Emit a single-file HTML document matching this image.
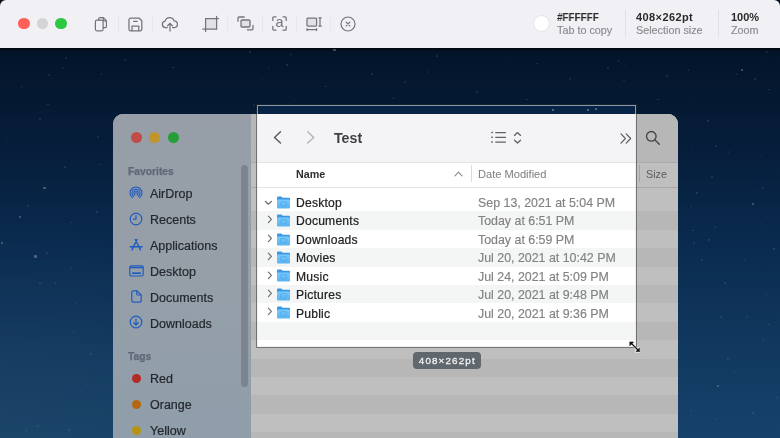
<!DOCTYPE html>
<html>
<head>
<meta charset="utf-8">
<title>Screenshot</title>
<style>
html,body{margin:0;padding:0;}
body{width:780px;height:438px;overflow:hidden;background:#060d18;font-family:"Liberation Sans",sans-serif;position:relative;}
.abs{position:absolute;}
.it,.row{-webkit-text-stroke:0.22px currentColor;}
.date,.t2{-webkit-text-stroke:0.15px currentColor;}
.t1,.t2,.it,.hd,.row,.date,#lab,.abs,.gt{will-change:transform;}
#bar{position:absolute;left:0;top:0;width:780px;height:48px;background:#f1f1f5;border-radius:6px 6px 0 0;z-index:20;}
#bar .dot{position:absolute;top:18px;width:11.300px;height:11.300px;margin-left:0px;border-radius:50%;}
#bar .sep{position:absolute;top:17px;width:1px;height:14px;background:#e5e5ea;}
#bar svg{position:absolute;overflow:visible;}
#bar .t1{position:absolute;top:11px;font-size:11px;font-weight:bold;color:#2a2a2c;white-space:nowrap;line-height:12px;}
#bar .t2{position:absolute;top:24px;font-size:10.8px;color:#8a8a8e;white-space:nowrap;line-height:12px;}
#screen{position:absolute;left:0;top:48px;width:780px;height:390px;overflow:hidden;background:#04244f;}
#wall{position:absolute;left:0;top:0;width:780px;height:390px;
 background:
 linear-gradient(180deg,rgba(0,0,0,0.75) 0px,rgba(0,0,0,0.25) 2px,rgba(0,0,0,0) 5px),
 radial-gradient(ellipse 300px 220px at 0% 100%, rgba(60,100,140,0.28), rgba(60,100,140,0) 100%),
 linear-gradient(180deg,#051b38 0%,#08284f 26%,#0e3a6a 51%,#174c80 77%,#1e598e 100%);}
.star{position:absolute;border-radius:50%;background:#c4d4ea;}
#win{position:absolute;left:113px;top:66px;width:565px;height:340px;border-radius:10px 10px 0 0;overflow:hidden;background:#fff;}
#side{position:absolute;left:0;top:0;width:138px;height:340px;background:linear-gradient(180deg,#cad3e0 0%,#c8d4e1 45%,#bfd3e4 100%);}
#side .tl{position:absolute;top:18px;width:11px;height:11px;border-radius:50%;}
#side .hd{position:absolute;left:14.600px;font-size:10.300px;font-weight:bold;color:#7f8b9e;-webkit-text-stroke:0.25px #7f8b9e;line-height:12px;}
#side .it{position:absolute;left:36.800px;font-size:12.5px;color:#30353d;line-height:14px;white-space:nowrap;}
#side svg{position:absolute;overflow:visible;}
#side .tag{position:absolute;left:19px;width:9px;height:9px;border-radius:50%;}
#thumb{position:absolute;left:128px;top:51px;width:7px;height:222px;border-radius:4px;background:#a5b0bf;}
#main{position:absolute;left:138px;top:0;width:427px;height:340px;background:#fff;}
#ftb{position:absolute;left:0;top:0;width:427px;height:48px;background:#f4f4f6;border-bottom:1px solid #e4e4e6;}
#main svg{position:absolute;overflow:visible;}
.stripe{position:absolute;left:0;width:427px;height:18.4px;background:#f4f5f5;}
.row{position:absolute;left:44.600px;font-size:12.100px;letter-spacing:0.22px;color:#222224;line-height:14px;white-space:nowrap;}
.date{position:absolute;left:227px;font-size:12.400px;color:#828282;line-height:14px;white-space:nowrap;}
#sel{position:absolute;left:257px;top:57px;width:377px;height:240px;border:1px solid rgba(225,230,238,0.6);box-shadow:0 0 0 2000px rgba(0,0,0,0.25), 0 0 0 1px rgba(60,60,60,0.5);z-index:5;}
#lab{position:absolute;left:413px;top:304px;width:67.5px;height:17.3px;border-radius:4px;background:#60676d;color:#f2f2f2;font-size:9.8px;-webkit-text-stroke:0.3px #f2f2f2;line-height:18.5px;text-align:center;z-index:6;letter-spacing:1.15px;text-indent:1.1px;}
</style>
</head>
<body>
<svg width="0" height="0" style="position:absolute"><defs><linearGradient id="fg" x1="0" y1="0" x2="0" y2="1"><stop offset="0" stop-color="#78cbfb"/><stop offset="1" stop-color="#58b3ef"/></linearGradient></defs></svg>
<div id="screen">
  <div id="wall"></div>
  <div id="stars"><i class="star" style="left:64.9px;top:8.8px;width:2.0px;height:2.0px;opacity:0.16"></i><i class="star" style="left:61.5px;top:19.2px;width:1.6px;height:1.6px;opacity:0.22"></i><i class="star" style="left:100.7px;top:25.0px;width:1.6px;height:1.6px;opacity:0.20"></i><i class="star" style="left:48.0px;top:25.7px;width:2.0px;height:2.0px;opacity:0.18"></i><i class="star" style="left:20.6px;top:38.4px;width:1.6px;height:1.6px;opacity:0.16"></i><i class="star" style="left:47.2px;top:55.7px;width:1.6px;height:1.6px;opacity:0.22"></i><i class="star" style="left:39.0px;top:70.0px;width:2.0px;height:2.0px;opacity:0.20"></i><i class="star" style="left:5.9px;top:89.6px;width:1.6px;height:1.6px;opacity:0.18"></i><i class="star" style="left:97.2px;top:88.2px;width:1.6px;height:1.6px;opacity:0.16"></i><i class="star" style="left:63.5px;top:117.9px;width:2.0px;height:2.0px;opacity:0.22"></i><i class="star" style="left:99.2px;top:115.8px;width:1.6px;height:1.6px;opacity:0.20"></i><i class="star" style="left:51.7px;top:150.6px;width:1.6px;height:1.6px;opacity:0.18"></i><i class="star" style="left:26.6px;top:157.0px;width:2.0px;height:2.0px;opacity:0.16"></i><i class="star" style="left:96.2px;top:163.0px;width:1.6px;height:1.6px;opacity:0.22"></i><i class="star" style="left:70.2px;top:173.7px;width:1.6px;height:1.6px;opacity:0.20"></i><i class="star" style="left:45.7px;top:203.8px;width:2.0px;height:2.0px;opacity:0.18"></i><i class="star" style="left:70.4px;top:219.6px;width:1.6px;height:1.6px;opacity:0.16"></i><i class="star" style="left:54.9px;top:234.2px;width:1.6px;height:1.6px;opacity:0.22"></i><i class="star" style="left:39.0px;top:234.0px;width:2.0px;height:2.0px;opacity:0.20"></i><i class="star" style="left:74.9px;top:254.2px;width:1.6px;height:1.6px;opacity:0.18"></i><i class="star" style="left:72.7px;top:283.2px;width:1.6px;height:1.6px;opacity:0.16"></i><i class="star" style="left:90.3px;top:305.3px;width:2.0px;height:2.0px;opacity:0.22"></i><i class="star" style="left:2.7px;top:313.5px;width:1.6px;height:1.6px;opacity:0.20"></i><i class="star" style="left:87.2px;top:335.8px;width:1.6px;height:1.6px;opacity:0.18"></i><i class="star" style="left:36.8px;top:376.5px;width:2.0px;height:2.0px;opacity:0.16"></i><i class="star" style="left:25.9px;top:381.2px;width:1.6px;height:1.6px;opacity:0.22"></i><i class="star" style="left:68.2px;top:381.2px;width:1.6px;height:1.6px;opacity:0.20"></i><i class="star" style="left:124.3px;top:11.2px;width:2.0px;height:2.0px;opacity:0.18"></i><i class="star" style="left:160.6px;top:24.5px;width:1.6px;height:1.6px;opacity:0.16"></i><i class="star" style="left:172.4px;top:18.8px;width:1.6px;height:1.6px;opacity:0.22"></i><i class="star" style="left:248.5px;top:2.5px;width:2.0px;height:2.0px;opacity:0.20"></i><i class="star" style="left:261.8px;top:30.6px;width:1.6px;height:1.6px;opacity:0.18"></i><i class="star" style="left:268.3px;top:18.8px;width:1.6px;height:1.6px;opacity:0.16"></i><i class="star" style="left:285.5px;top:15.6px;width:2.0px;height:2.0px;opacity:0.22"></i><i class="star" style="left:290.1px;top:5.7px;width:1.6px;height:1.6px;opacity:0.20"></i><i class="star" style="left:294.5px;top:51.5px;width:1.6px;height:1.6px;opacity:0.18"></i><i class="star" style="left:252.8px;top:55.7px;width:2.0px;height:2.0px;opacity:0.16"></i><i class="star" style="left:325.0px;top:37.6px;width:1.6px;height:1.6px;opacity:0.22"></i><i class="star" style="left:369.9px;top:15.8px;width:1.6px;height:1.6px;opacity:0.20"></i><i class="star" style="left:370.5px;top:25.2px;width:2.0px;height:2.0px;opacity:0.18"></i><i class="star" style="left:404.3px;top:33.2px;width:1.6px;height:1.6px;opacity:0.16"></i><i class="star" style="left:392.5px;top:49.3px;width:1.6px;height:1.6px;opacity:0.22"></i><i class="star" style="left:436.0px;top:6.8px;width:2.0px;height:2.0px;opacity:0.20"></i><i class="star" style="left:426.5px;top:23.2px;width:1.6px;height:1.6px;opacity:0.18"></i><i class="star" style="left:480.6px;top:24.5px;width:1.6px;height:1.6px;opacity:0.16"></i><i class="star" style="left:476.0px;top:42.6px;width:2.0px;height:2.0px;opacity:0.22"></i><i class="star" style="left:526.4px;top:50.6px;width:1.6px;height:1.6px;opacity:0.20"></i><i class="star" style="left:536.0px;top:14.5px;width:1.6px;height:1.6px;opacity:0.18"></i><i class="star" style="left:568.9px;top:30.4px;width:2.0px;height:2.0px;opacity:0.16"></i><i class="star" style="left:617.9px;top:12.2px;width:1.6px;height:1.6px;opacity:0.22"></i><i class="star" style="left:624.5px;top:15.8px;width:1.6px;height:1.6px;opacity:0.20"></i><i class="star" style="left:606.8px;top:18.6px;width:2.0px;height:2.0px;opacity:0.18"></i><i class="star" style="left:623.2px;top:31.9px;width:1.6px;height:1.6px;opacity:0.16"></i><i class="star" style="left:657.2px;top:50.6px;width:1.6px;height:1.6px;opacity:0.22"></i><i class="star" style="left:665.7px;top:27.3px;width:2.0px;height:2.0px;opacity:0.20"></i><i class="star" style="left:689.9px;top:51.5px;width:1.6px;height:1.6px;opacity:0.18"></i><i class="star" style="left:735.6px;top:25.4px;width:1.6px;height:1.6px;opacity:0.16"></i><i class="star" style="left:753.7px;top:29.5px;width:2.0px;height:2.0px;opacity:0.22"></i><i class="star" style="left:768.3px;top:40.6px;width:1.6px;height:1.6px;opacity:0.20"></i><i class="star" style="left:687.7px;top:21.0px;width:1.6px;height:1.6px;opacity:0.18"></i><i class="star" style="left:766.0px;top:2.5px;width:2.0px;height:2.0px;opacity:0.16"></i><i class="star" style="left:707.0px;top:72.4px;width:1.6px;height:1.6px;opacity:0.22"></i><i class="star" style="left:690.9px;top:96.7px;width:1.6px;height:1.6px;opacity:0.20"></i><i class="star" style="left:715.0px;top:97.3px;width:2.0px;height:2.0px;opacity:0.18"></i><i class="star" style="left:727.6px;top:103.1px;width:1.6px;height:1.6px;opacity:0.16"></i><i class="star" style="left:760.5px;top:106.8px;width:1.6px;height:1.6px;opacity:0.22"></i><i class="star" style="left:710.5px;top:128.3px;width:2.0px;height:2.0px;opacity:0.20"></i><i class="star" style="left:755.6px;top:140.5px;width:1.6px;height:1.6px;opacity:0.18"></i><i class="star" style="left:762.0px;top:139.0px;width:1.6px;height:1.6px;opacity:0.16"></i><i class="star" style="left:695.6px;top:144.0px;width:2.0px;height:2.0px;opacity:0.22"></i><i class="star" style="left:690.2px;top:157.7px;width:1.6px;height:1.6px;opacity:0.20"></i><i class="star" style="left:766.9px;top:167.8px;width:1.6px;height:1.6px;opacity:0.18"></i><i class="star" style="left:714.3px;top:177.7px;width:2.0px;height:2.0px;opacity:0.16"></i><i class="star" style="left:692.0px;top:181.7px;width:1.6px;height:1.6px;opacity:0.22"></i><i class="star" style="left:708.1px;top:191.0px;width:1.6px;height:1.6px;opacity:0.20"></i><i class="star" style="left:693.0px;top:193.8px;width:2.0px;height:2.0px;opacity:0.18"></i><i class="star" style="left:763.9px;top:181.7px;width:1.6px;height:1.6px;opacity:0.16"></i><i class="star" style="left:773.2px;top:200.4px;width:1.6px;height:1.6px;opacity:0.22"></i><i class="star" style="left:701.2px;top:210.6px;width:2.0px;height:2.0px;opacity:0.20"></i><i class="star" style="left:744.4px;top:210.8px;width:1.6px;height:1.6px;opacity:0.18"></i><i class="star" style="left:678.9px;top:167.8px;width:1.6px;height:1.6px;opacity:0.16"></i><i class="star" style="left:723.6px;top:234.4px;width:2.0px;height:2.0px;opacity:0.22"></i><i class="star" style="left:765.0px;top:245.8px;width:1.6px;height:1.6px;opacity:0.20"></i><i class="star" style="left:720.1px;top:268.2px;width:1.6px;height:1.6px;opacity:0.18"></i><i class="star" style="left:746.0px;top:268.0px;width:2.0px;height:2.0px;opacity:0.16"></i><i class="star" style="left:768.0px;top:275.7px;width:1.6px;height:1.6px;opacity:0.22"></i><i class="star" style="left:762.0px;top:290.7px;width:1.6px;height:1.6px;opacity:0.20"></i><i class="star" style="left:727.4px;top:310.3px;width:2.0px;height:2.0px;opacity:0.18"></i><i class="star" style="left:733.9px;top:323.2px;width:1.6px;height:1.6px;opacity:0.16"></i><i class="star" style="left:690.2px;top:361.7px;width:1.6px;height:1.6px;opacity:0.22"></i><i class="star" style="left:752.4px;top:364.2px;width:2.0px;height:2.0px;opacity:0.20"></i><i class="star" style="left:714.5px;top:370.4px;width:1.6px;height:1.6px;opacity:0.18"></i><i class="star" style="left:776.2px;top:348.7px;width:1.6px;height:1.6px;opacity:0.16"></i><i class="star" style="left:43.3px;top:139.0px;width:2.4px;height:2.4px;opacity:0.50"></i><i class="star" style="left:18.8px;top:168.0px;width:2.4px;height:2.4px;opacity:0.50"></i><i class="star" style="left:34.4px;top:207.2px;width:2.4px;height:2.4px;opacity:0.50"></i><i class="star" style="left:0.8px;top:193.8px;width:2.4px;height:2.4px;opacity:0.50"></i><i class="star" style="left:333.3px;top:0.6px;width:2.4px;height:2.4px;opacity:0.50"></i><i class="star" style="left:740.9px;top:20.6px;width:2.4px;height:2.4px;opacity:0.50"></i><i class="star" style="left:751.5px;top:155.1px;width:2.4px;height:2.4px;opacity:0.50"></i><i class="star" style="left:716.7px;top:337.0px;width:2.4px;height:2.4px;opacity:0.50"></i><i class="star" style="left:587.0px;top:61.1px;width:2.4px;height:2.4px;opacity:0.50"></i><i class="star" style="left:594.8px;top:59.8px;width:2.4px;height:2.4px;opacity:0.50"></i><i class="star" style="left:552.1px;top:61.1px;width:2.4px;height:2.4px;opacity:0.50"></i></div>
  <div id="win">
    <div id="side">
      <div class="tl" style="left:18px;background:#ff665e;"></div>
      <div class="tl" style="left:36.300px;background:#ffc83c;"></div>
      <div class="tl" style="left:55px;background:#30d34c;"></div>
      <div class="hd" style="top:52px;">Favorites</div>
      <!-- airdrop -->
      <svg style="left:16.200px;top:72px" width="14" height="14" viewBox="0 0 14 14" fill="none" stroke="#2a7bff" stroke-width="1.150" stroke-linecap="round">
        <path d="M3.560 11.900A6 6 0 1 1 10.440 11.900"/>
        <path d="M4.710 10.380A4 4 0 1 1 9.290 10.380"/>
        <path d="M5.800 8.820A2.100 2.100 0 1 1 8.200 8.820"/>
        <circle cx="7" cy="7.100" r=".9" fill="#2a7bff" stroke="none"/>
      </svg>
      <div class="it" style="top:72.5px;">AirDrop</div>
      <!-- recents -->
      <svg style="left:16px;top:98px" width="14" height="14" viewBox="0 0 14 14" fill="none" stroke="#2a7bff" stroke-width="1.200" stroke-linecap="round" stroke-linejoin="round">
        <circle cx="7" cy="7" r="5.800"/>
        <path d="M7 3.600V7.200H4.400"/>
      </svg>
      <div class="it" style="top:98.5px;">Recents</div>
      <!-- applications -->
      <svg style="left:16px;top:124px" width="14" height="14" viewBox="0 0 14 14" fill="none" stroke="#2a7bff" stroke-width="1.400" stroke-linecap="round" stroke-linejoin="round">
        <path d="M8 1.500L3 11.900M6.300 1.500L11.500 11.900M1.200 8.700H13.200"/>
      </svg>
      <div class="it" style="top:124.5px;">Applications</div>
      <!-- desktop -->
      <svg style="left:16px;top:151px" width="15" height="12" viewBox="0 0 15 12" fill="none" stroke="#2a7bff" stroke-width="1.200" stroke-linejoin="round">
        <rect x=".8" y=".8" width="13.400" height="10.200" rx="1.500"/>
        <path d="M1 2.600h13" stroke-width="1.400"/>
        <path d="M3 8.200h9" stroke-width="1.700"/>
      </svg>
      <div class="it" style="top:150.5px;">Desktop</div>
      <!-- documents -->
      <svg style="left:18px;top:176px" width="11" height="13" viewBox="0 0 11 13" fill="none" stroke="#2a7bff" stroke-width="1.200" stroke-linejoin="round" stroke-linecap="round">
        <path d="M2.200 .8h3.800l4.200 4.200v5.800a1.400 1.400 0 0 1-1.400 1.400H2.200A1.400 1.400 0 0 1 .8 10.800V2.200A1.400 1.400 0 0 1 2.200 .8z"/>
        <path d="M5.800 1v3a1 1 0 0 0 1 1h3"/>
      </svg>
      <div class="it" style="top:176.5px;">Documents</div>
      <!-- downloads -->
      <svg style="left:16px;top:201px" width="14" height="14" viewBox="0 0 14 14" fill="none" stroke="#2a7bff" stroke-width="1.200" stroke-linecap="round" stroke-linejoin="round">
        <circle cx="7" cy="7" r="5.800"/>
        <path d="M7 3.800v6M4.600 7.600L7 10l2.400-2.400"/>
      </svg>
      <div class="it" style="top:202.5px;">Downloads</div>
      <div class="hd" style="top:237px;">Tags</div>
      <div class="tag" style="top:259.500px;background:#f03a32;"></div>
      <div class="it" style="top:257.5px;">Red</div>
      <div class="tag" style="top:285.500px;background:#f08a18;"></div>
      <div class="it" style="top:283.5px;">Orange</div>
      <div class="tag" style="top:311.500px;background:#f0c41c;"></div>
      <div class="it" style="top:309.5px;">Yellow</div>
      <div id="thumb"></div>
    </div>
    <div id="main">
      <div id="ftb"></div>
      <!-- back / fwd -->
      <svg style="left:21px;top:16px" width="11" height="15" viewBox="0 0 11 15" fill="none" stroke="#58585c" stroke-width="1.400" stroke-linecap="round" stroke-linejoin="round"><path d="M8.500 1.700L2.500 7.400 8.500 13.100"/></svg>
      <svg style="left:54px;top:16px" width="11" height="15" viewBox="0 0 11 15" fill="none" stroke="#b4b4b8" stroke-width="1.400" stroke-linecap="round" stroke-linejoin="round"><path d="M2.700 1.700L8.700 7.400 2.700 13.100"/></svg>
      <div class="abs" style="left:83.300px;top:14.600px;font-size:14.200px;font-weight:bold;color:#404044;line-height:18px;">Test</div>
      <!-- list icon -->
      <svg style="left:240px;top:17px" width="16" height="13" viewBox="0 0 16 13" fill="none" stroke="#626266" stroke-width="1.250" stroke-linecap="round">
        <path d="M4.700 1.600h9.800M4.700 6.300h9.800M4.700 11h9.800"/>
        <path d="M.8 1.600h.5M.8 6.300h.5M.8 11h.5" stroke-width="1.500"/>
      </svg>
      <svg style="left:262px;top:17px" width="9" height="14" viewBox="0 0 9 14" fill="none" stroke="#626266" stroke-width="1.300" stroke-linecap="round" stroke-linejoin="round">
        <path d="M1.500 4.400L4.500 1.600l3 2.800M1.500 9.200l3 2.800 3-2.800"/>
      </svg>
      <svg style="left:369px;top:19px" width="12" height="11" viewBox="0 0 12 11" fill="none" stroke="#5c5c60" stroke-width="1.200" stroke-linecap="round" stroke-linejoin="round">
        <path d="M1 .8L5.400 5.500 1 10.200M6.200 .8l4.400 4.700-4.400 4.700"/>
      </svg>
      <svg style="left:394.400px;top:15.600px" width="16" height="16" viewBox="0 0 16 16" fill="none" stroke="#5a5a5e" stroke-width="1.350" stroke-linecap="round">
        <circle cx="6.300" cy="6.300" r="4.800"/><path d="M9.800 9.800l4.500 4.500"/>
      </svg>
      <!-- header -->
      <div class="abs" style="left:44.700px;top:54px;font-size:10.700px;font-weight:bold;color:#2e2e30;line-height:12px;">Name</div>
      <svg style="left:203px;top:57px" width="9" height="6" viewBox="0 0 9 6" fill="none" stroke="#8a8a8e" stroke-width="1.100" stroke-linecap="round" stroke-linejoin="round"><path d="M1 4.800L4.500 1.200 8 4.800"/></svg>
      <div class="abs" style="left:219.500px;top:51px;width:1px;height:17px;background:#dcdcde;"></div>
      <div class="abs" style="left:227px;top:54px;font-size:11.100px;color:#7c7c80;line-height:12px;white-space:nowrap;">Date Modified</div>
      <div class="abs" style="left:388px;top:51px;width:1px;height:17px;background:#dcdcde;"></div>
      <div class="abs" style="left:395px;top:54px;font-size:10.800px;color:#7c7c80;line-height:12px;">Size</div>
      <div class="abs" style="left:0;top:73px;width:427px;height:1px;background:#e2e2e4;"></div>
      <div class="stripe" style="top:97.4px;"></div>
      <div class="stripe" style="top:134.2px;"></div>
      <div class="stripe" style="top:171.0px;"></div>
      <div class="stripe" style="top:207.8px;"></div>
      <div class="stripe" style="top:244.6px;"></div>
      <div class="stripe" style="top:281.4px;"></div>
      <div class="stripe" style="top:318.2px;"></div>
      <div class="stripe" style="top:355.0px;"></div>
      <svg style="left:13px;top:85.5px" width="9" height="6" viewBox="0 0 9 6" fill="none" stroke="#6e6e72" stroke-width="1.200" stroke-linecap="round" stroke-linejoin="round"><path d="M1.300 1.300L4.400 4.200 7.500 1.300"/></svg>
      <svg style="left:25px;top:81.7px" width="15" height="13" viewBox="0 0 15 13"><path d="M1 1.600A1 1 0 0 1 2 .6h3.200a1 1 0 0 1 .7.300l.8.800h6.300a1 1 0 0 1 1 1V5H1z" fill="#3b98e4"/><rect x="1" y="3.400" width="13" height="9.100" rx="1.100" fill="url(#fg)"/><rect x="4.700" y="5.700" width="5.600" height="4.200" rx=".6" fill="none" stroke="#4ea8ea" stroke-width=".8"/></svg>
      <div class="row" style="top:81.7px;">Desktop</div>
      <div class="date" style="top:81.7px;">Sep 13, 2021 at 5:04 PM</div>
      <svg style="left:15.700px;top:101.3px" width="6" height="9" viewBox="0 0 6 9" fill="none" stroke="#6e6e72" stroke-width="1.200" stroke-linecap="round" stroke-linejoin="round"><path d="M1.400 1.200L4.400 4.400 1.400 7.600"/></svg>
      <svg style="left:25px;top:100.1px" width="15" height="13" viewBox="0 0 15 13"><path d="M1 1.600A1 1 0 0 1 2 .6h3.200a1 1 0 0 1 .7.300l.8.800h6.300a1 1 0 0 1 1 1V5H1z" fill="#3b98e4"/><rect x="1" y="3.400" width="13" height="9.100" rx="1.100" fill="url(#fg)"/><rect x="4.700" y="5.700" width="5.600" height="4.200" rx=".6" fill="none" stroke="#4ea8ea" stroke-width=".8"/></svg>
      <div class="row" style="top:100.2px;">Documents</div>
      <div class="date" style="top:100.2px;">Today at 6:51 PM</div>
      <svg style="left:15.700px;top:119.7px" width="6" height="9" viewBox="0 0 6 9" fill="none" stroke="#6e6e72" stroke-width="1.200" stroke-linecap="round" stroke-linejoin="round"><path d="M1.400 1.200L4.400 4.400 1.400 7.600"/></svg>
      <svg style="left:25px;top:118.5px" width="15" height="13" viewBox="0 0 15 13"><path d="M1 1.600A1 1 0 0 1 2 .6h3.200a1 1 0 0 1 .7.300l.8.800h6.300a1 1 0 0 1 1 1V5H1z" fill="#3b98e4"/><rect x="1" y="3.400" width="13" height="9.100" rx="1.100" fill="url(#fg)"/><rect x="4.700" y="5.700" width="5.600" height="4.200" rx=".6" fill="none" stroke="#4ea8ea" stroke-width=".8"/></svg>
      <div class="row" style="top:118.7px;">Downloads</div>
      <div class="date" style="top:118.7px;">Today at 6:59 PM</div>
      <svg style="left:15.700px;top:138.1px" width="6" height="9" viewBox="0 0 6 9" fill="none" stroke="#6e6e72" stroke-width="1.200" stroke-linecap="round" stroke-linejoin="round"><path d="M1.400 1.200L4.400 4.400 1.400 7.600"/></svg>
      <svg style="left:25px;top:136.9px" width="15" height="13" viewBox="0 0 15 13"><path d="M1 1.600A1 1 0 0 1 2 .6h3.200a1 1 0 0 1 .7.300l.8.800h6.300a1 1 0 0 1 1 1V5H1z" fill="#3b98e4"/><rect x="1" y="3.400" width="13" height="9.100" rx="1.100" fill="url(#fg)"/><rect x="4.700" y="5.700" width="5.600" height="4.200" rx=".6" fill="none" stroke="#4ea8ea" stroke-width=".8"/></svg>
      <div class="row" style="top:137.2px;">Movies</div>
      <div class="date" style="top:137.2px;">Jul 20, 2021 at 10:42 PM</div>
      <svg style="left:15.700px;top:156.5px" width="6" height="9" viewBox="0 0 6 9" fill="none" stroke="#6e6e72" stroke-width="1.200" stroke-linecap="round" stroke-linejoin="round"><path d="M1.400 1.200L4.400 4.400 1.400 7.600"/></svg>
      <svg style="left:25px;top:155.3px" width="15" height="13" viewBox="0 0 15 13"><path d="M1 1.600A1 1 0 0 1 2 .6h3.200a1 1 0 0 1 .7.300l.8.800h6.300a1 1 0 0 1 1 1V5H1z" fill="#3b98e4"/><rect x="1" y="3.400" width="13" height="9.100" rx="1.100" fill="url(#fg)"/><rect x="4.700" y="5.700" width="5.600" height="4.200" rx=".6" fill="none" stroke="#4ea8ea" stroke-width=".8"/></svg>
      <div class="row" style="top:155.7px;">Music</div>
      <div class="date" style="top:155.7px;">Jul 24, 2021 at 5:09 PM</div>
      <svg style="left:15.700px;top:174.9px" width="6" height="9" viewBox="0 0 6 9" fill="none" stroke="#6e6e72" stroke-width="1.200" stroke-linecap="round" stroke-linejoin="round"><path d="M1.400 1.200L4.400 4.400 1.400 7.600"/></svg>
      <svg style="left:25px;top:173.7px" width="15" height="13" viewBox="0 0 15 13"><path d="M1 1.600A1 1 0 0 1 2 .6h3.200a1 1 0 0 1 .7.300l.8.800h6.300a1 1 0 0 1 1 1V5H1z" fill="#3b98e4"/><rect x="1" y="3.400" width="13" height="9.100" rx="1.100" fill="url(#fg)"/><rect x="4.700" y="5.700" width="5.600" height="4.200" rx=".6" fill="none" stroke="#4ea8ea" stroke-width=".8"/></svg>
      <div class="row" style="top:174.2px;">Pictures</div>
      <div class="date" style="top:174.2px;">Jul 20, 2021 at 9:48 PM</div>
      <svg style="left:15.700px;top:193.3px" width="6" height="9" viewBox="0 0 6 9" fill="none" stroke="#6e6e72" stroke-width="1.200" stroke-linecap="round" stroke-linejoin="round"><path d="M1.400 1.200L4.400 4.400 1.400 7.600"/></svg>
      <svg style="left:25px;top:192.1px" width="15" height="13" viewBox="0 0 15 13"><path d="M1 1.600A1 1 0 0 1 2 .6h3.200a1 1 0 0 1 .7.300l.8.800h6.300a1 1 0 0 1 1 1V5H1z" fill="#3b98e4"/><rect x="1" y="3.400" width="13" height="9.100" rx="1.100" fill="url(#fg)"/><rect x="4.700" y="5.700" width="5.600" height="4.200" rx=".6" fill="none" stroke="#4ea8ea" stroke-width=".8"/></svg>
      <div class="row" style="top:192.7px;">Public</div>
      <div class="date" style="top:192.7px;">Jul 20, 2021 at 9:36 PM</div>
    </div>
  </div>
  <div id="sel"></div>
  <div id="lab">408×262pt</div>
  <svg style="position:absolute;left:629px;top:293px;z-index:7;overflow:visible" width="12" height="12" viewBox="0 0 12 12">
    <g fill="#fff" stroke="#fff" stroke-width="2.200" stroke-linejoin="round" stroke-linecap="round"><path d="M1 1h3.600L1 4.600z"/><path d="M10.500 10.500H6.900l3.600-3.600z"/><path d="M2.500 2.500L9 9"/></g>
    <g fill="#111" stroke="#111" stroke-width=".6" stroke-linejoin="round" stroke-linecap="round"><path d="M1 1h3.600L1 4.600z"/><path d="M10.500 10.500H6.900l3.600-3.600z"/><path d="M2.500 2.500L9 9" stroke-width="1.300"/></g>
  </svg>

</div>
<div id="bar">
  <div class="dot" style="left:18.3px;background:#fe5f57;"></div>
  <div class="dot" style="left:36.8px;background:#d4d4d6;"></div>
  <div class="dot" style="left:55.3px;background:#2bc840;"></div>
  <div class="sep" style="left:118px"></div>
  <div class="sep" style="left:152px"></div>
  <div class="sep" style="left:227px"></div>
  <div class="sep" style="left:262px"></div>
  <div class="sep" style="left:296px"></div>
  <div class="sep" style="left:330px"></div>
  <!-- copy -->
  <svg style="left:94px;top:16px" width="14" height="16" viewBox="0 0 14 16" fill="none" stroke="#737378" stroke-width="1.200" stroke-linejoin="round" stroke-linecap="round">
    <path d="M4.700 4V2.900a1.300 1.300 0 0 1 1.300-1.300h3.400l3 3v5.800a1.300 1.300 0 0 1-1.300 1.300H9.300"/>
    <path d="M9.300 1.800v2.100a.9.900 0 0 0 .9.900h2.100"/>
    <rect x="1.400" y="4.200" width="7.700" height="10.600" rx="1.500"/>
  </svg>
  <!-- save -->
  <svg style="left:128px;top:17px" width="15" height="15" viewBox="0 0 15 15" fill="none" stroke="#737378" stroke-width="1.25" stroke-linejoin="round" stroke-linecap="round">
    <path d="M2.6 1.2h8.6l2.6 2.6v8.4a1.6 1.6 0 0 1-1.6 1.6H2.6A1.6 1.6 0 0 1 1 12.200V2.800A1.6 1.6 0 0 1 2.600 1.200z"/>
    <path d="M4 13.600V9.000h6.800v4.600"/>
    <path d="M5.600 4.400h3.600"/>
  </svg>
  <!-- cloud -->
  <svg style="left:161px;top:16px" width="18" height="16" viewBox="0 0 18 16" fill="none" stroke="#737378" stroke-width="1.25" stroke-linejoin="round" stroke-linecap="round">
    <path d="M6.200 11.600H4.600a3.200 3.200 0 0 1-.5-6.360A4.600 4.600 0 0 1 13 4.800a3.400 3.400 0 0 1 .4 6.780h-1.800"/>
    <path d="M9 15V7.600"/>
    <path d="M6.600 9.800L9 7.400l2.400 2.400"/>
  </svg>
  <!-- crop -->
  <svg style="left:202px;top:16px" width="18" height="17" viewBox="0 0 18 17" fill="none" stroke="#737378" stroke-width="1.250" stroke-linecap="round">
    <rect x="3.600" y="2.600" width="11" height="10.400" fill="#e2e2e6" stroke="none"/>
    <path d="M3.600 2.600v13M.8 13h13.800"/>
    <path d="M14.600 .4v12.600M3.600 2.600h13"/>
  </svg>
  <!-- windows -->
  <svg style="left:237px;top:16px" width="17" height="15" viewBox="0 0 17 15" fill="none" stroke="#737378" stroke-width="1.300" stroke-linecap="round" stroke-linejoin="round">
    <rect x="4" y="4" width="9" height="7" rx="1" fill="#e2e2e6"/>
    <path d="M1 5.200V2.200a1.200 1.200 0 0 1 1.200-1.200h5"/>
    <path d="M16 9.400v3.200a1.200 1.200 0 0 1-1.200 1.200H10.400"/>
  </svg>
  <!-- [a] -->
  <svg class="gt" style="left:272px;top:16px" width="15" height="15" viewBox="0 0 15 15" fill="none" stroke="#737378" stroke-width="1.250" stroke-linecap="round" stroke-linejoin="round">
    <path d="M.8 4.400V1.800a1 1 0 0 1 1-1h2.200"/>
    <path d="M14.200 4.400V1.800a1 1 0 0 0-1-1h-2.200"/>
    <path d="M.8 10.400v2.800a1 1 0 0 0 1 1h2.200"/>
    <path d="M14.200 10.400v2.800a1 1 0 0 1-1 1h-2.200"/>
    <text x="7.600" y="11.100" font-size="14.500" font-family="Liberation Sans, sans-serif" fill="#737378" stroke="none" text-anchor="middle">a</text>
  </svg>
  <!-- monitor text -->
  <svg style="left:306px;top:17px" width="16" height="14" viewBox="0 0 16 14" fill="none" stroke="#737378" stroke-width="1.250" stroke-linecap="round" stroke-linejoin="round">
    <rect x="1" y="1" width="9.600" height="8" rx=".8" fill="#e2e2e6"/>
    <path d="M1 12.600h9.600M1 11.600v2M10.600 11.600v2" stroke-width="1.200"/>
    <path d="M14 1v8M12.800 .8h2.400M12.800 9.200h2.400" stroke-width="1.200"/>
  </svg>
  <!-- close -->
  <svg style="left:340px;top:16px" width="16" height="16" viewBox="0 0 16 16" fill="none" stroke="#737378" stroke-width="1.200" stroke-linecap="round">
    <circle cx="8" cy="8" r="7"/>
    <path d="M6.150 6.150l3.700 3.700M9.850 6.150l-3.700 3.700"/>
  </svg>
  <div class="abs" style="left:533px;top:15px;width:15px;height:15px;border-radius:50%;background:#fff;border:1px solid #e2e2e4;"></div>
  <div class="t1" style="left:557px;transform:scaleX(0.9);transform-origin:0 0;">#FFFFFF</div>
  <div class="t2" style="left:557px;">Tab to copy</div>
  <div class="abs" style="left:625px;top:10px;width:1px;height:27px;background:#e0e0e4;"></div>
  <div class="t1" style="left:636px;letter-spacing:0.4px;">408×262pt</div>
  <div class="t2" style="left:636px;">Selection size</div>
  <div class="abs" style="left:718px;top:10px;width:1px;height:27px;background:#e0e0e4;"></div>
  <div class="t1" style="left:731px;">100%</div>
  <div class="t2" style="left:731px;">Zoom</div>
</div>
</body>
</html>
